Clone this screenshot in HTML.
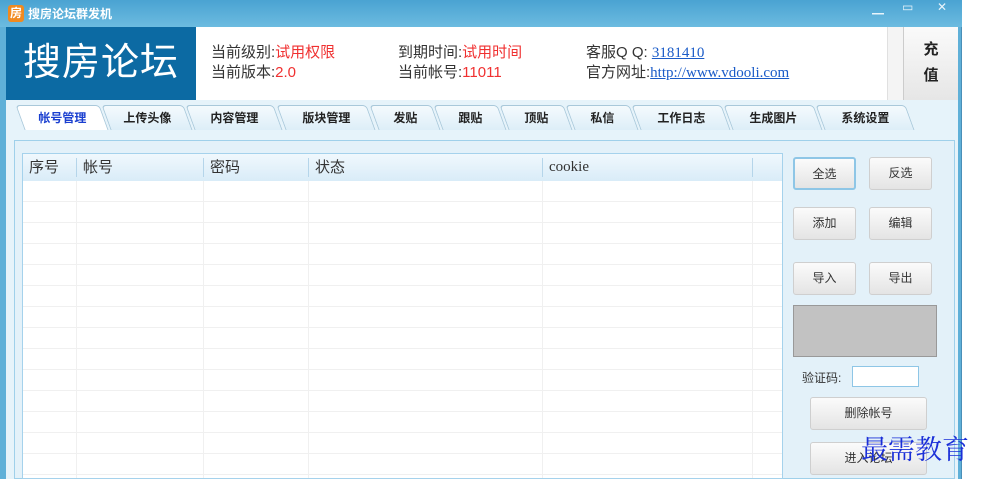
<!DOCTYPE html>
<html><head><meta charset="utf-8"><style>
*{margin:0;padding:0;box-sizing:border-box}
body{width:983px;height:479px;background:#fff;position:relative;overflow:hidden;font-family:"Liberation Sans","Noto Sans CJK SC",sans-serif}
.win{position:absolute;left:0;top:0;width:962px;height:479px;background:#5fb0d8;border-right:1px solid #4a8fb8}
.title{position:absolute;left:0;top:0;width:962px;height:27px;background:linear-gradient(#4aa3d2,#6cbbe0)}
.title .ic{position:absolute;left:8px;top:5px;width:16px;height:17px;background:#f08a20;border-radius:3px;color:#fff;font-size:12px;line-height:17px;text-align:center;font-weight:bold}
.title .t{position:absolute;left:28px;top:5px;color:#fff;font-size:12px;font-weight:bold}
.ctl{position:absolute;top:0;color:#e8f4fb;font-size:12px}
.hdr{position:absolute;left:6px;top:27px;width:952px;height:73px;background:#fff}
.logo{position:absolute;left:0;top:0;width:190px;height:73px;background:#0c6aa3;color:#fff;font-size:38px;line-height:73px;text-align:center;letter-spacing:1px}
.info{position:absolute;font-size:15px;color:#333;line-height:20px}
.r{color:#f03030}.lk{color:#1a5bc8;text-decoration:underline;font-family:"Liberation Serif",serif}
.sb{position:absolute;left:881px;top:0;width:16px;height:73px;background:#f4f4f4;border-left:1px solid #e0e0e0}
.cz{position:absolute;left:897px;top:0;width:55px;height:73px;background:linear-gradient(#fafafa,#e6e6e6);border-left:1px solid #ccc;font-size:15px;font-weight:bold;text-align:center;line-height:26px;padding-top:10px;color:#222}
.tabs{position:absolute;left:6px;top:100px;width:952px;height:379px;background:#e6f3fa}
.tab{position:absolute;top:5px;height:25px;font-size:12px;font-weight:bold;color:#222;text-align:center;line-height:25px;background:linear-gradient(#f4fafd,#ddeef8);border:1px solid #a9c8da;border-bottom:none;border-radius:4px 4px 0 0;transform:skewX(20deg)}
.tab span{display:inline-block;transform:skewX(-20deg)}
.panel{position:absolute;left:8px;top:40px;width:941px;height:339px;background:#e3f1f9;border:1px solid #9fd0ea}
.grid{position:absolute;left:22px;top:153px;width:761px;height:326px;background:#fff;border:1px solid #a5d2ec}
.gh{height:27px;background:linear-gradient(#f0f8fd,#d9ecf8);font-size:15px;color:#333;line-height:27px;position:relative}
.row{height:21px;border-bottom:1px solid #f0f0f0}
.vl{position:absolute;top:0;bottom:0;width:1px;background:#f0f0f0}
.btn{position:absolute;width:63px;height:33px;background:linear-gradient(#fbfbfb,#e4e4e4);border:1px solid #cfcfcf;border-radius:3px;font-size:12px;color:#333;text-align:center;line-height:31px}
</style></head><body>
<div class="win">
<div class="title"><div class="ic">房</div><div class="t">搜房论坛群发机</div>
<div class="ctl" style="left:872px">▁</div><div class="ctl" style="left:902px">▭</div><div class="ctl" style="left:937px">✕</div></div>
<div class="hdr">
<div class="logo">搜房论坛</div>
<div class="info" style="left:205px;top:16px">当前级别:<span class="r">试用权限</span><br>当前版本:<span class="r">2.0</span></div>
<div class="info" style="left:392px;top:16px">到期时间:<span class="r">试用时间</span><br>当前帐号:<span class="r">11011</span></div>
<div class="info" style="left:580px;top:16px">客服Q Q: <span class="lk">3181410</span><br>官方网址:<span class="lk">http://www.vdooli.com</span></div>
<div class="sb"></div>
<div class="cz">充<br>值</div>
</div>
<div class="tabs">
<div class="tab" style="left:14px;width:84px;background:#fff"><span style="color:#1a3fd0">帐号管理</span></div>
<div class="tab" style="left:100px;width:82px"><span>上传头像</span></div>
<div class="tab" style="left:184px;width:88px"><span>内容管理</span></div>
<div class="tab" style="left:275px;width:90px"><span>版块管理</span></div>
<div class="tab" style="left:368px;width:62px"><span>发贴</span></div>
<div class="tab" style="left:432px;width:64px"><span>跟贴</span></div>
<div class="tab" style="left:498px;width:64px"><span>顶贴</span></div>
<div class="tab" style="left:564px;width:64px"><span>私信</span></div>
<div class="tab" style="left:630px;width:90px"><span>工作日志</span></div>
<div class="tab" style="left:722px;width:90px"><span>生成图片</span></div>
<div class="tab" style="left:814px;width:90px"><span>系统设置</span></div>
<div class="panel"></div>
</div>
</div>
<div class="grid">
<div class="gh"><span style="position:absolute;left:6px">序号</span><span style="position:absolute;left:60px">帐号</span><span style="position:absolute;left:187px">密码</span><span style="position:absolute;left:292px">状态</span><span style="position:absolute;left:526px;font-family:'Liberation Serif',serif">cookie</span>
<div style="position:absolute;left:53px;top:4px;width:1px;height:19px;background:#b5d5ea"></div>
<div style="position:absolute;left:180px;top:4px;width:1px;height:19px;background:#b5d5ea"></div>
<div style="position:absolute;left:285px;top:4px;width:1px;height:19px;background:#b5d5ea"></div>
<div style="position:absolute;left:519px;top:4px;width:1px;height:19px;background:#b5d5ea"></div>
<div style="position:absolute;left:729px;top:4px;width:1px;height:19px;background:#b5d5ea"></div></div>
<div class="vl" style="left:53px;top:27px"></div><div class="vl" style="left:180px;top:27px"></div><div class="vl" style="left:285px;top:27px"></div><div class="vl" style="left:519px;top:27px"></div><div class="vl" style="left:729px;top:27px"></div>
<div class="row"></div><div class="row"></div><div class="row"></div><div class="row"></div><div class="row"></div><div class="row"></div><div class="row"></div><div class="row"></div><div class="row"></div><div class="row"></div><div class="row"></div><div class="row"></div><div class="row"></div><div class="row"></div>
</div>
<div class="btn" style="left:793px;top:157px;border:2px solid #8ec6e6">全选</div>
<div class="btn" style="left:869px;top:157px">反选</div>
<div class="btn" style="left:793px;top:207px">添加</div>
<div class="btn" style="left:869px;top:207px">编辑</div>
<div class="btn" style="left:793px;top:262px">导入</div>
<div class="btn" style="left:869px;top:262px">导出</div>
<div style="position:absolute;left:793px;top:305px;width:144px;height:52px;background:#c2c2c2;border:1px solid #999"></div>
<div style="position:absolute;left:802px;top:369px;font-size:12px;color:#333">验证码:</div>
<div style="position:absolute;left:852px;top:366px;width:67px;height:21px;background:#fff;border:1px solid #8ec6e6"></div>
<div class="btn" style="left:810px;top:397px;width:117px">删除帐号</div>
<div class="btn" style="left:810px;top:442px;width:117px">进入论坛</div>
<div style="position:absolute;left:861px;top:428px;font-size:27px;color:#1a2fd8;font-family:'Noto Serif CJK SC','Noto Sans CJK SC',serif">最需教育</div>
</body></html>
